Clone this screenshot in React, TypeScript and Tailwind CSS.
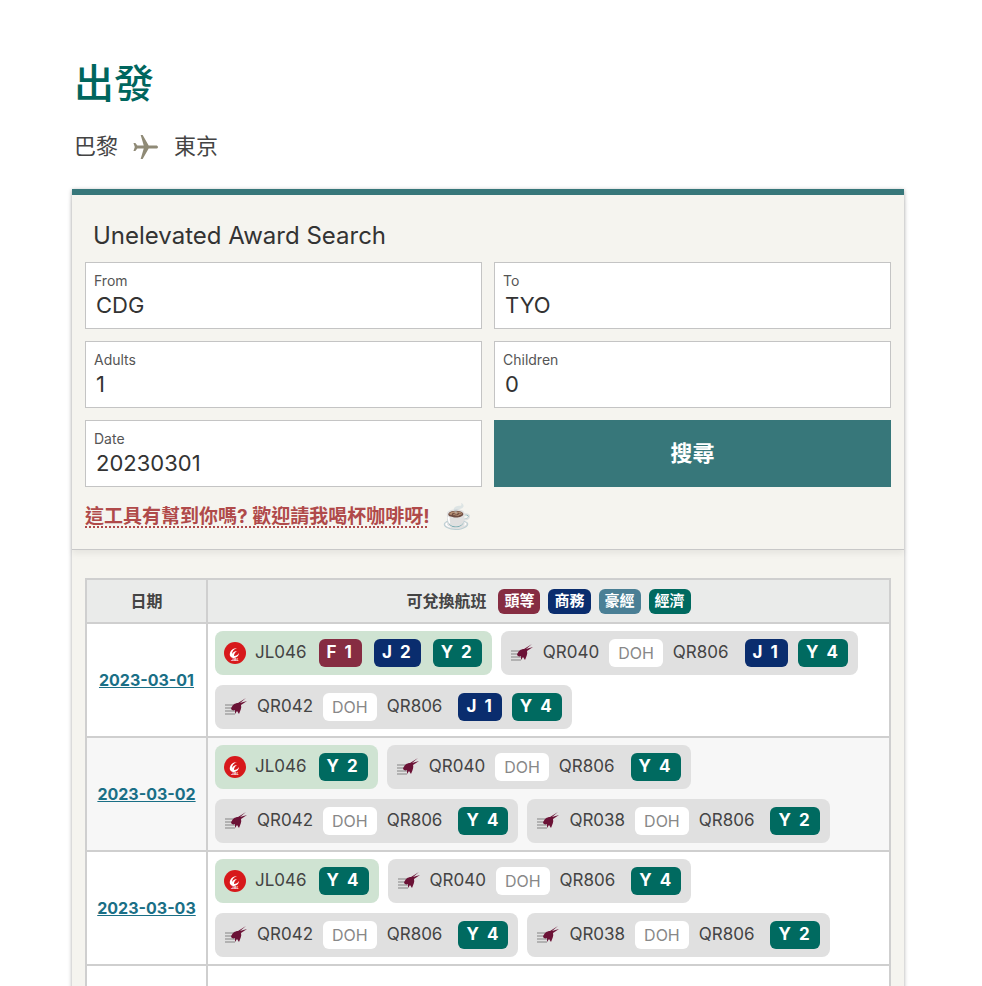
import React from "react";

const font = { fontFamily: 'Inter, "Noto Sans CJK TC", sans-serif' };

function Jal() {
  return (
    <svg width="24" height="24" viewBox="0 0 24 24">
      <circle cx="12" cy="12" r="11" fill="#d7191b" />
      <path d="M7 15c-1-4 2-8 7-8-3 1-5 3-5 6 1-2 3-3 5-3-2 1-3 3-3 5 2 0 4-1 5-3 0 3-3 5-6 5-1 0-2-1-3-2z" fill="#fff" />
      <text x="12" y="20" fontSize="4" fill="#fff" textAnchor="middle" fontStyle="italic" fontWeight="bold">JAL</text>
    </svg>
  );
}

function Qr() {
  return (
    <svg width="26" height="24" viewBox="0 0 26 24">
      {[10, 13, 16, 19].map((y) => (
        <line key={y} x1="2" x2="12" y1={y} y2={y} stroke="#9a9a9a" strokeWidth="1.3" />
      ))}
      <path d="M8 14c1-4 4-6 7-6l8-5-6 5 7-2-6 4c1 3-1 6-2 9l-2-3-2 3 0-4c-2 1-3 0-4-1z" fill="#6b1236" />
    </svg>
  );
}

const cls: Record<string, string> = {
  F: "bg-[#862d42]",
  J: "bg-[#0a2d6e]",
  Y: "bg-[#006a60]",
};

function Badge({ c, n }: { c: string; n: number }) {
  return (
    <span className={`${cls[c]} text-white font-bold text-[17px] rounded-md h-[28px] px-[8px] flex items-center tracking-[2px]`}>
      {c} {n}
    </span>
  );
}

function JalChip({ b }: { b: [string, number][] }) {
  return (
    <div className="bg-[#cfe3d2] rounded-lg h-[44px] pl-[8px] pr-[10px] flex items-center gap-[12px]">
      <div className="flex items-center gap-[8px]">
        <Jal />
        <span className="text-[17px] text-[#444]">JL046</span>
      </div>
      {b.map(([c, n]) => <Badge key={c} c={c} n={n} />)}
    </div>
  );
}

function QrChip({ f, s, b }: { f: string; s: string; b: [string, number][] }) {
  return (
    <div className="bg-[#e0e0e0] rounded-lg h-[44px] pl-[8px] pr-[10px] flex items-center gap-[10px]">
      <div className="flex items-center gap-[8px]">
        <Qr />
        <span className="text-[17px] text-[#444]">{f}</span>
      </div>
      <span className="bg-white rounded-md h-[28px] px-[9px] flex items-center text-[16px] text-[#888]">DOH</span>
      <span className="text-[17px] text-[#444] mr-[6px]">{s}</span>
      {b.map(([c, n]) => <Badge key={c} c={c} n={n} />)}
    </div>
  );
}

function Field({ label, value }: { label: string; value: string }) {
  return (
    <div className="bg-white border border-[#c4c4c4] h-[67px] px-[8px] pt-[9px]">
      <div className="text-[14px] text-[#555] leading-[18px]">{label}</div>
      <div className="text-[22px] text-[#333] leading-[30px] pl-[2px]">{value}</div>
    </div>
  );
}

const rows = [
  {
    d: "2023-03-01",
    c: [
      <JalChip key="a" b={[["F", 1], ["J", 2], ["Y", 2]]} />,
      <QrChip key="b" f="QR040" s="QR806" b={[["J", 1], ["Y", 4]]} />,
      <QrChip key="c" f="QR042" s="QR806" b={[["J", 1], ["Y", 4]]} />,
    ],
  },
  {
    d: "2023-03-02",
    c: [
      <JalChip key="a" b={[["Y", 2]]} />,
      <QrChip key="b" f="QR040" s="QR806" b={[["Y", 4]]} />,
      <QrChip key="c" f="QR042" s="QR806" b={[["Y", 4]]} />,
      <QrChip key="d" f="QR038" s="QR806" b={[["Y", 2]]} />,
    ],
  },
  {
    d: "2023-03-03",
    c: [
      <JalChip key="a" b={[["Y", 4]]} />,
      <QrChip key="b" f="QR040" s="QR806" b={[["Y", 4]]} />,
      <QrChip key="c" f="QR042" s="QR806" b={[["Y", 4]]} />,
      <QrChip key="d" f="QR038" s="QR806" b={[["Y", 2]]} />,
    ],
  },
];

export default function App() {
  return (
    <div className="bg-white min-h-[986px] h-[986px] overflow-hidden pl-[72px] pt-[58px]" style={font}>
      <h1 className="text-[40px] text-[#00665e] leading-[52px] pl-[2px] font-medium">出發</h1>
      <div className="flex items-center mt-[20px] text-[22px] text-[#444] gap-[12px] pl-[2px]">
        <span>巴黎</span>
        <svg width="32" height="32" viewBox="0 0 24 24" fill="#8f8a76">
          <path d="M21 12c0-.8-.7-1.2-1.5-1.2H14L9.5 3H8l2.3 7.8H5.5L4 9H2.6l1 3-1 3H4l1.5-1.8h4.8L8 21h1.5L14 13.2h5.5c.8 0 1.5-.4 1.5-1.2z" />
        </svg>
        <span>東京</span>
      </div>
      <div className="mt-[26px] w-[832px] border-t-[6px] border-[#37777a] bg-[#f5f4ef] shadow-[0_1px_4px_rgba(0,0,0,0.35)]">
        <div className="px-[13px] pt-[26px] pb-[14px] border-b border-[#c8c8c8] shadow-[0_4px_6px_rgba(0,0,0,0.06)]">
          <div className="text-[24px] text-[#333] pl-[8px] leading-[30px] mb-[11px]">Unelevated Award Search</div>
          <div className="grid grid-cols-2 gap-x-[12px] gap-y-[12px]">
            <Field label="From" value="CDG" />
            <Field label="To" value="TYO" />
            <Field label="Adults" value="1" />
            <Field label="Children" value="0" />
            <Field label="Date" value="20230301" />
            <button className="bg-[#37777a] text-white text-[22px] font-bold h-[67px]">搜尋</button>
          </div>
          <div className="flex items-center mt-[12px] gap-[12px]">
            <span className="text-[19px] font-bold text-[#b04a4a] underline decoration-dotted decoration-2 underline-offset-4">這工具有幫到你嗎? 歡迎請我喝杯咖啡呀!</span>
            <span className="text-[24px]">☕</span>
          </div>
        </div>
        <div className="px-[13px] pt-[28px]">
          <table className="w-full border-collapse border-2 border-[#cfcfcf] bg-white">
            <thead>
              <tr className="bg-[#eaebea] h-[44px]">
                <th className="w-[121px] border-2 border-[#cfcfcf] text-[16px] font-bold text-[#444]">日期</th>
                <th className="border-2 border-[#cfcfcf] text-[16px] font-bold text-[#444]">
                  <div className="flex items-center justify-center gap-[8px]">
                    <span className="mr-[4px]">可兌換航班</span>
                    <span className="bg-[#862d42] text-white text-[15px] rounded-md px-[6px] h-[25px] flex items-center">頭等</span>
                    <span className="bg-[#0a2d6e] text-white text-[15px] rounded-md px-[6px] h-[25px] flex items-center">商務</span>
                    <span className="bg-[#4a7f95] text-white text-[15px] rounded-md px-[6px] h-[25px] flex items-center">豪經</span>
                    <span className="bg-[#006a60] text-white text-[15px] rounded-md px-[6px] h-[25px] flex items-center">經濟</span>
                  </div>
                </th>
              </tr>
            </thead>
            <tbody>
              {rows.map((r, i) => (
                <tr key={r.d} className={i % 2 ? "bg-[#f7f7f7]" : "bg-white"}>
                  <td className="border-2 border-[#cfcfcf] text-center align-middle">
                    <a className="text-[#1a6f86] font-bold text-[16px] underline">{r.d}</a>
                  </td>
                  <td className="border-2 border-[#cfcfcf] px-[7px] pt-[7px] pb-[7px]">
                    <div className="flex flex-wrap gap-x-[9px] gap-y-[10px]">{r.c}</div>
                  </td>
                </tr>
              ))}
              <tr className="bg-white h-[60px]">
                <td className="border-2 border-[#cfcfcf]"></td>
                <td className="border-2 border-[#cfcfcf]"></td>
              </tr>
            </tbody>
          </table>
        </div>
      </div>
    </div>
  );
}
